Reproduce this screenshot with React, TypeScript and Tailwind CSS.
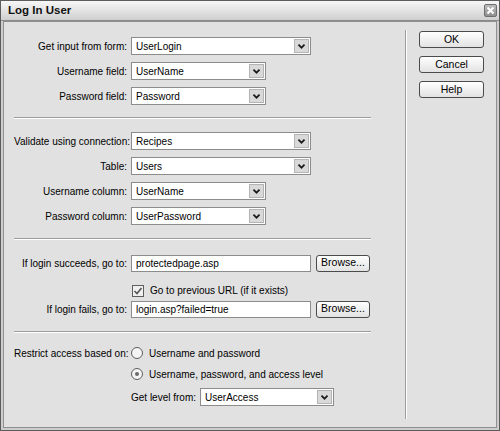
import React from "react";

const font = { fontFamily: '"Liberation Sans", Arial, sans-serif' };

function Chevron() {
  return (
    <svg width="15" height="16" viewBox="0 0 15 16">
      <path d="M4 6.5 L7.5 10 L11 6.5" fill="none" stroke="#1a1a1a" strokeWidth="2" />
    </svg>
  );
}

function Select({ value, width }: { value: string; width: string }) {
  return (
    <div className={`${width} h-[18px] flex items-stretch border border-[#8c8c8c] bg-white`}>
      <div className="flex-1 flex items-center pl-[4px] text-[10px] text-black">{value}</div>
      <div className="w-[15px] m-px flex items-center justify-center bg-[#d9d9d9] border border-[#b4b4b4]">
        <Chevron />
      </div>
    </div>
  );
}

function TextBox({ value }: { value: string }) {
  return (
    <div className="w-[180px] h-[17px] flex items-center pl-[4px] border border-[#8c8c8c] bg-white text-[10px] text-black">
      {value}
    </div>
  );
}

function Btn({ label, width }: { label: string; width: string }) {
  return (
    <div
      className={`${width} h-[17px] flex items-center justify-center rounded-[3px] border border-[#4b4b4b] bg-gradient-to-b from-white to-[#e2e2e2] text-[10.5px] text-black`}
    >
      {label}
    </div>
  );
}

function Row({ label, children }: { label: string; children: React.ReactNode }) {
  return (
    <div className="flex items-center h-[18px]">
      <div className="w-[117px] pr-[4px] text-right text-[10px] text-black whitespace-nowrap">{label}</div>
      {children}
    </div>
  );
}

function Separator() {
  return <div className="w-[357px] h-[2px] border-t border-[#9c9c9c] border-b border-b-white" />;
}

function Radio({ checked }: { checked?: boolean }) {
  return (
    <div className="w-[12px] h-[12px] rounded-full border border-[#5e5e5e] bg-[#f4f4f4] flex items-center justify-center">
      {checked && <div className="w-[4px] h-[4px] rounded-full bg-[#6a6a6a]" />}
    </div>
  );
}

export default function App() {
  return (
    <div className="w-[500px] h-[431px] flex flex-col border border-[#5c5c5c] bg-[#cdcdcd]" style={font}>
      <div className="h-[20px] flex items-center justify-between pl-[7px] pr-[2px] bg-gradient-to-b from-[#f7f7f7] to-[#cfcfcf] border-b border-[#8a8a8a]">
        <span className="text-[11.5px] font-bold text-[#111]">Log In User</span>
        <div className="w-[13px] h-[13px] flex items-center justify-center rounded-[2px] border border-[#6e6e6e] bg-gradient-to-b from-[#bdbdbd] to-[#8f8f8f]">
          <svg width="9" height="9" viewBox="0 0 9 9">
            <path d="M1.5 1.5 L7.5 7.5 M7.5 1.5 L1.5 7.5" stroke="white" strokeWidth="2" />
          </svg>
        </div>
      </div>

      <div className="flex-1 flex mx-[2px] mb-[2px] border border-[#8f8f8f] bg-[#e1e1e1]">
        {/* form */}
        <div className="w-[401px] flex flex-col pl-[10px] pt-[15px]">
          <div className="flex flex-col gap-[7px]">
            <Row label="Get input from form:">
              <Select value="UserLogin" width="w-[180px]" />
            </Row>
            <Row label="Username field:">
              <Select value="UserName" width="w-[135px]" />
            </Row>
            <Row label="Password field:">
              <Select value="Password" width="w-[135px]" />
            </Row>
          </div>

          <div className="mt-[12px]">
            <Separator />
          </div>

          <div className="flex flex-col gap-[7px] mt-[13px]">
            <Row label="Validate using connection:">
              <Select value="Recipes" width="w-[180px]" />
            </Row>
            <Row label="Table:">
              <Select value="Users" width="w-[180px]" />
            </Row>
            <Row label="Username column:">
              <Select value="UserName" width="w-[135px]" />
            </Row>
            <Row label="Password column:">
              <Select value="UserPassword" width="w-[135px]" />
            </Row>
          </div>

          <div className="mt-[13px]">
            <Separator />
          </div>

          <div className="flex flex-col mt-[14px]">
            <Row label="If login succeeds, go to:">
              <TextBox value="protectedpage.asp" />
              <div className="ml-[5px]">
                <Btn label="Browse..." width="w-[54px]" />
              </div>
            </Row>
            <div className="flex items-center h-[17px] mt-[10px] pl-[118px]">
              <div className="w-[12px] h-[12px] border border-[#5e5e5e] bg-[#efefef] flex items-center justify-center">
                <svg width="10" height="10" viewBox="0 0 10 10">
                  <path d="M1.5 5 L4 7.5 L8.5 2" fill="none" stroke="#555" strokeWidth="1.6" />
                </svg>
              </div>
              <span className="ml-[6px] text-[10px] text-black">Go to previous URL (if it exists)</span>
            </div>
            <div className="mt-[1px]">
              <Row label="If login fails, go to:">
                <TextBox value="login.asp?failed=true" />
                <div className="ml-[5px]">
                  <Btn label="Browse..." width="w-[54px]" />
                </div>
              </Row>
            </div>
          </div>

          <div className="mt-[13px]">
            <Separator />
          </div>

          <div className="flex flex-col mt-[11px]">
            <Row label="Restrict access based on:">
              <Radio />
              <span className="ml-[6px] text-[10px] text-black">Username and password</span>
            </Row>
            <div className="flex items-center h-[18px] mt-[3px] pl-[117px]">
              <Radio checked />
              <span className="ml-[6px] text-[10px] text-black">Username, password, and access level</span>
            </div>
            <div className="flex items-center h-[18px] mt-[5px] pl-[117px] gap-[4px]">
              <span className="text-[10px] text-black whitespace-nowrap">Get level from:</span>
              <Select value="UserAccess" width="w-[134px]" />
            </div>
          </div>
        </div>

        {/* vertical separator */}
        <div className="w-[2px] my-[8px] border-l border-[#9c9c9c] border-r border-r-white" />

        {/* buttons */}
        <div className="flex flex-col gap-[8px] pt-[9px] pl-[12px]">
          <Btn label="OK" width="w-[65px]" />
          <Btn label="Cancel" width="w-[65px]" />
          <Btn label="Help" width="w-[65px]" />
        </div>
      </div>
    </div>
  );
}
